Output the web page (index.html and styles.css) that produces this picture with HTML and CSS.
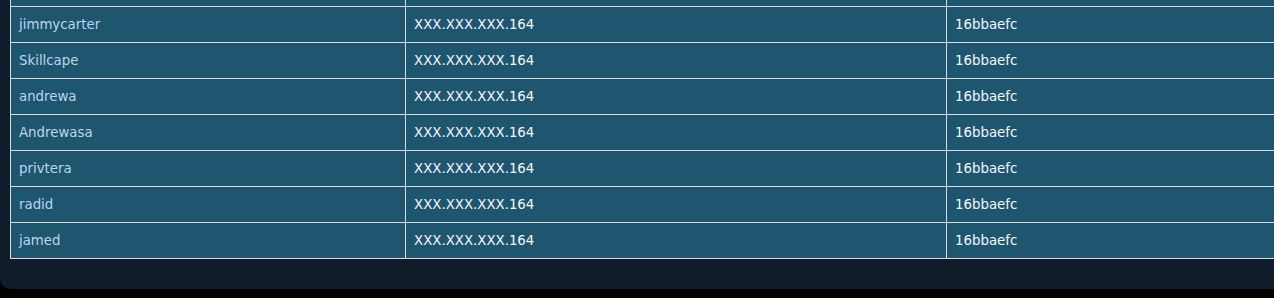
FILE: index.html
```html
<!DOCTYPE html>
<html>
<head>
<meta charset="utf-8">
<link rel="stylesheet" href="styles.css">
</head>
<body>
<div class="panel">
  <table class="grid">
    <tbody>
      <tr class="cut"><td class="name"></td><td></td><td></td></tr>
      <tr><td class="name">jimmycarter</td><td>XXX.XXX.XXX.164</td><td>16bbaefc</td></tr>
      <tr><td class="name">Skillcape</td><td>XXX.XXX.XXX.164</td><td>16bbaefc</td></tr>
      <tr><td class="name">andrewa</td><td>XXX.XXX.XXX.164</td><td>16bbaefc</td></tr>
      <tr><td class="name">Andrewasa</td><td>XXX.XXX.XXX.164</td><td>16bbaefc</td></tr>
      <tr><td class="name">privtera</td><td>XXX.XXX.XXX.164</td><td>16bbaefc</td></tr>
      <tr><td class="name">radid</td><td>XXX.XXX.XXX.164</td><td>16bbaefc</td></tr>
      <tr><td class="name">jamed</td><td>XXX.XXX.XXX.164</td><td>16bbaefc</td></tr>
    </tbody>
  </table>
</div>
</body>
</html>
```

FILE: styles.css
```css
html, body {
  margin: 0;
  padding: 0;
  background: #000;
  overflow: hidden;
}
.panel {
  width: 1300px;
  height: 289px;
  background: #111c2a;
  border-bottom-left-radius: 10px;
  padding-left: 10px;
  box-sizing: border-box;
  overflow: hidden;
}
.grid {
  margin-top: -30px;
  border-collapse: collapse;
  width: 1300px;
  table-layout: fixed;
  font-family: "DejaVu Sans", Verdana, sans-serif;
  font-size: 13.33px;
}
.grid td {
  background: #1e5670;
  border: 1px solid #dcdcdc;
  height: 36px;
  padding: 0 0 0 8px;
  box-sizing: border-box;
  color: #f6f6f6;
  vertical-align: middle;
  white-space: nowrap;
}
.grid td:nth-child(1) { width: 395px; }
.grid td:nth-child(2) { width: 541px; }
.grid td.name { color: #bcd6ea; }
```
